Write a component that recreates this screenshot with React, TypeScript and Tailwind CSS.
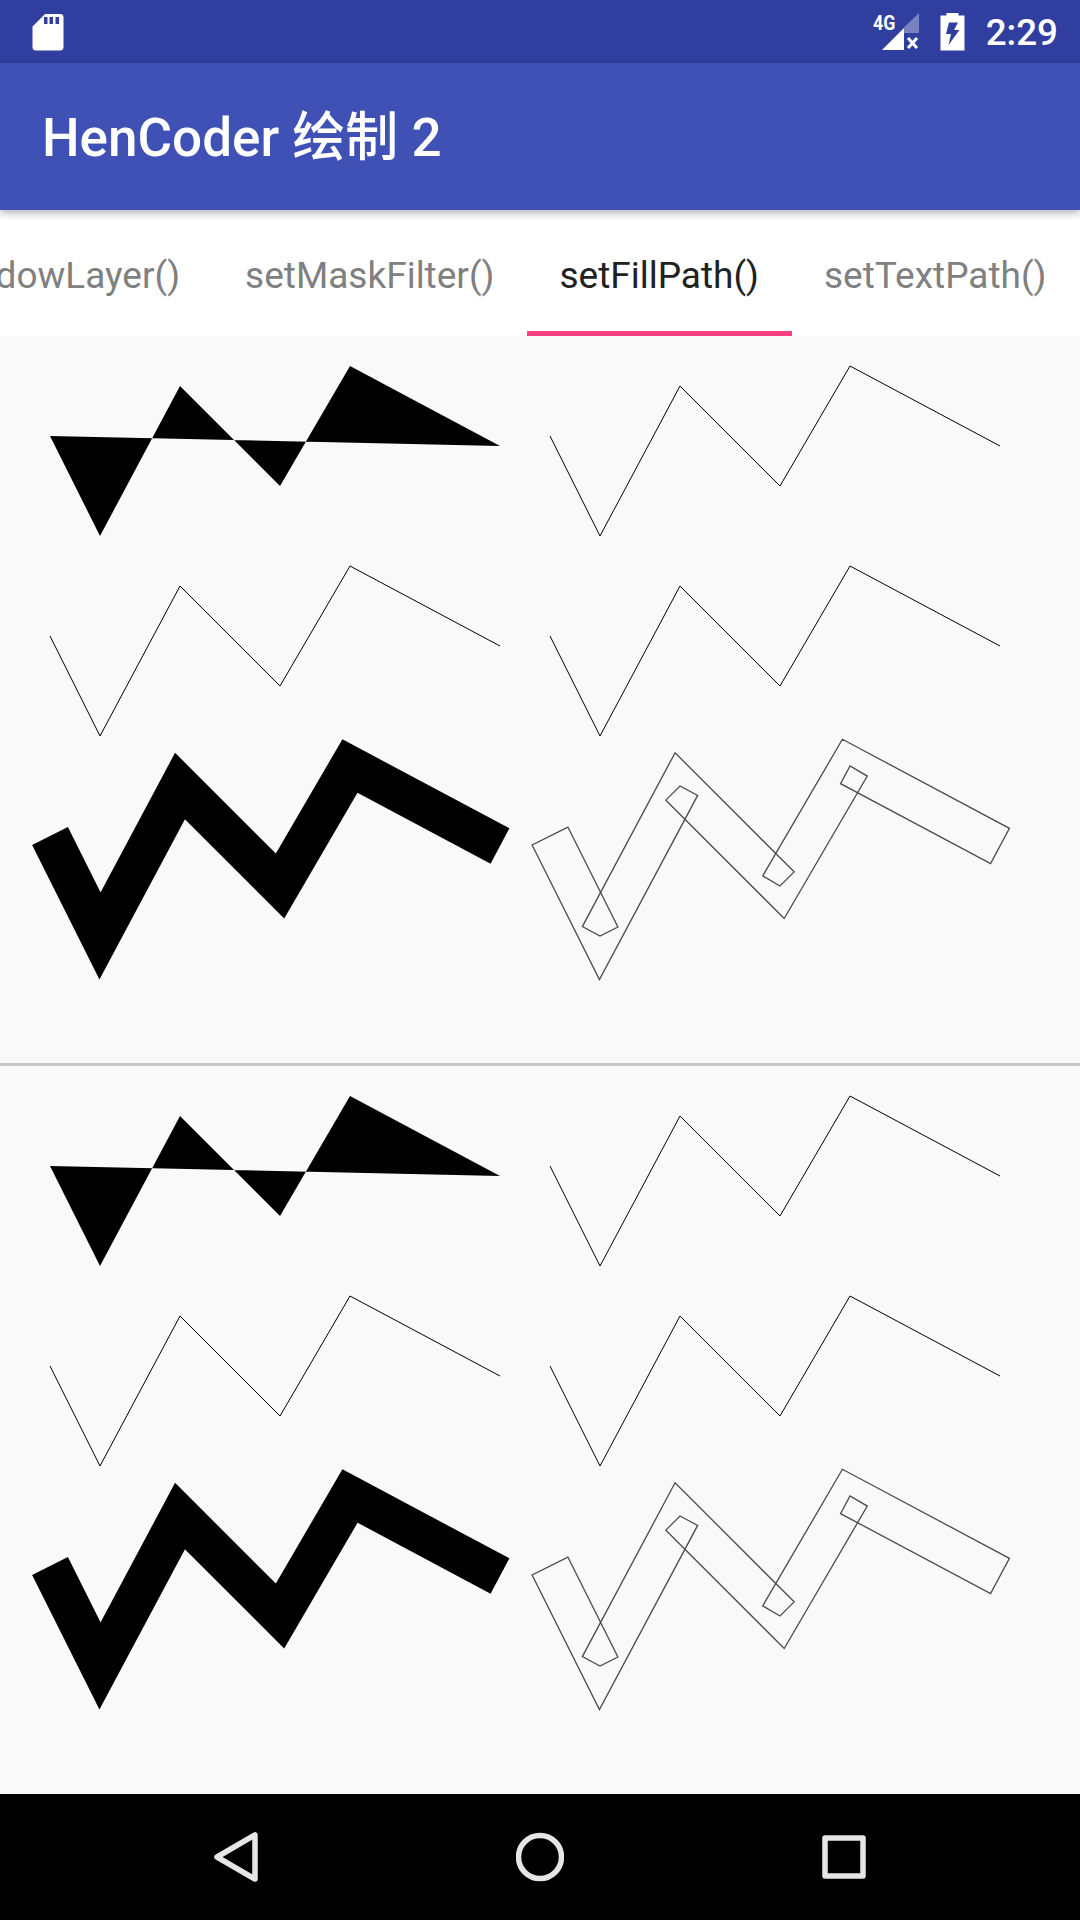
const zigzag: [number, number][] = [
  [50, 100],
  [100, 200],
  [180, 50],
  [280, 150],
  [350, 30],
  [500, 110],
]

const tabs = ["setShadowLayer()", "setMaskFilter()", "setFillPath()", "setTextPath()"]

function shift(points: [number, number][], dx: number, dy: number) {
  return points.map(([x, y]) => [x + dx, y + dy] as [number, number])
}

function toPath(points: [number, number][], close = false) {
  return "M" + points.map(([x, y]) => `${x.toFixed(2)} ${y.toFixed(2)}`).join("L") + (close ? "Z" : "")
}

// outline of a 40 wide stroke, inner joins go through the pivot like the android path does
function strokeOutline(points: [number, number][], half: number) {
  const normals = points.slice(1).map(([x, y], i) => {
    const dx = x - points[i][0]
    const dy = y - points[i][1]
    const len = Math.hypot(dx, dy)
    return [-dy / len, dx / len]
  })
  const sideA: [number, number][] = []
  const sideB: [number, number][] = []
  const off = (p: [number, number], n: number[], s: number): [number, number] => [p[0] + n[0] * s, p[1] + n[1] * s]
  sideA.push(off(points[0], normals[0], half))
  sideB.push(off(points[0], normals[0], -half))
  for (let i = 1; i < points.length - 1; i++) {
    const p = points[i]
    const a = normals[i - 1]
    const b = normals[i]
    const cross = a[0] * b[1] - a[1] * b[0]
    const mx = a[0] + b[0]
    const my = a[1] + b[1]
    const k = (half * 2) / (mx * mx + my * my)
    if (cross < 0) {
      sideA.push([p[0] + mx * k, p[1] + my * k])
      sideB.push(off(p, a, -half), p, off(p, b, -half))
    } else {
      sideB.push([p[0] - mx * k, p[1] - my * k])
      sideA.push(off(p, a, half), p, off(p, b, half))
    }
  }
  const last = points[points.length - 1]
  const n = normals[normals.length - 1]
  sideA.push(off(last, n, half))
  sideB.push(off(last, n, -half))
  return toPath([...sideA, ...sideB.reverse()], true)
}

function PathPanel({ height }: { height: number }) {
  return (
    <svg width="1080" height={height} viewBox={`0 0 1080 ${height}`} className="block">
      <path d={toPath(zigzag)} fill="#000" />
      <path d={toPath(shift(zigzag, 500, 0))} fill="none" stroke="#000" strokeWidth="1" />
      <path d={toPath(shift(zigzag, 0, 200))} fill="none" stroke="#000" strokeWidth="1" />
      <path d={toPath(shift(zigzag, 500, 200))} fill="none" stroke="#000" strokeWidth="1" />
      <path d={toPath(shift(zigzag, 0, 400))} fill="none" stroke="#000" strokeWidth="40" strokeMiterlimit="4" />
      <path d={strokeOutline(shift(zigzag, 500, 400), 20)} fill="none" stroke="#000" strokeWidth="1.3" strokeOpacity="0.7" />
    </svg>
  )
}

function SdCardIcon() {
  return (
    <svg width="32" height="38" viewBox="0 0 32 38">
      <path
        fillRule="evenodd"
        fill="#fff"
        d="M13 1H28Q31.5 1 31.5 4V34Q31.5 37.5 28 37.5H4Q0.5 37.5 0.5 34V13.5ZM12 4V11H15.5V4ZM17.5 4V11H21V4ZM23.5 4V11H27V4Z"
      />
    </svg>
  )
}

function SignalIcon() {
  return (
    <svg width="48" height="38" viewBox="0 0 48 38">
      <path d="M32 14.5L47 0V20H32Z" fill="#fff" fillOpacity="0.35" />
      <path d="M10 37L32 15V37Z" fill="#fff" />
      <path d="M36 25L45 35M45 25L36 35" stroke="#fff" strokeWidth="3" />
    </svg>
  )
}

function BatteryIcon() {
  return (
    <svg width="25" height="38" viewBox="0 0 25 38">
      <path
        fillRule="evenodd"
        fill="#fff"
        d="M6.5 0H18.5V2.5H24.5V37.5H0.5V2.5H6.5ZM9 9.5L6 21H11L8.5 32L19.5 17H14L18 9.5Z"
      />
    </svg>
  )
}

export default function App() {
  return (
    <div className="w-[1080px] h-[1920px] flex flex-col bg-[#f9f9f9] overflow-hidden font-['Roboto','Noto_Sans_CJK_SC',sans-serif]">
      <div className="h-[63px] shrink-0 bg-[#303f9f] flex items-center pl-[32px] pr-[22px]">
        <SdCardIcon />
        <div className="ml-auto flex items-center">
          <div className="relative mr-[20px]">
            <SignalIcon />
            <span className="absolute left-px top-[-2px] text-[21px] leading-[24px] font-bold text-white scale-x-[0.85] origin-left">
              4G
            </span>
          </div>
          <BatteryIcon />
          <span className="ml-[21px] pt-[2px] text-[36.75px] leading-[44px] font-medium text-white">2:29</span>
        </div>
      </div>

      <div className="relative z-10 h-[147px] shrink-0 bg-[#3f51b5] flex items-center pl-[42px] pt-[2px] shadow-[0_3px_8px_rgba(0,0,0,0.3)]">
        <span className="text-[53px] leading-[64px] font-medium text-white">HenCoder 绘制 2</span>
      </div>

      <div className="h-[126px] shrink-0 bg-white flex justify-end overflow-hidden pr-px">
        {tabs.map((tab) => {
          const active = tab === "setFillPath()"
          return (
            <div
              key={tab}
              className={
                active
                  ? "shrink-0 px-[32.5px] h-full flex items-center border-b-[5px] border-[#ff4081] pt-[10px] text-[37px] text-[#212121]"
                  : "shrink-0 px-[32.5px] h-full flex items-center border-b-[5px] border-transparent pt-[10px] text-[37px] text-[#808080]"
              }
            >
              {tab}
            </div>
          )
        })}
      </div>

      <PathPanel height={727} />
      <div className="h-[3px] shrink-0 bg-[#c6c6c6]" />
      <PathPanel height={728} />

      <div className="h-[126px] shrink-0 bg-black flex items-center justify-between px-[212px]">
        <svg width="48" height="52" viewBox="0 0 48 52" fill="none" stroke="#e6e6e6" strokeWidth="5.5" strokeLinejoin="round">
          <path d="M5 26L43 4V48Z" />
        </svg>
        <svg width="48" height="52" viewBox="0 0 48 52" fill="none" stroke="#e6e6e6" strokeWidth="5.5">
          <circle cx="24" cy="26" r="21.5" />
        </svg>
        <svg width="48" height="52" viewBox="0 0 48 52" fill="none" stroke="#e6e6e6" strokeWidth="5.5" strokeLinejoin="round">
          <rect x="5" y="7" width="38" height="38" />
        </svg>
      </div>
    </div>
  )
}
